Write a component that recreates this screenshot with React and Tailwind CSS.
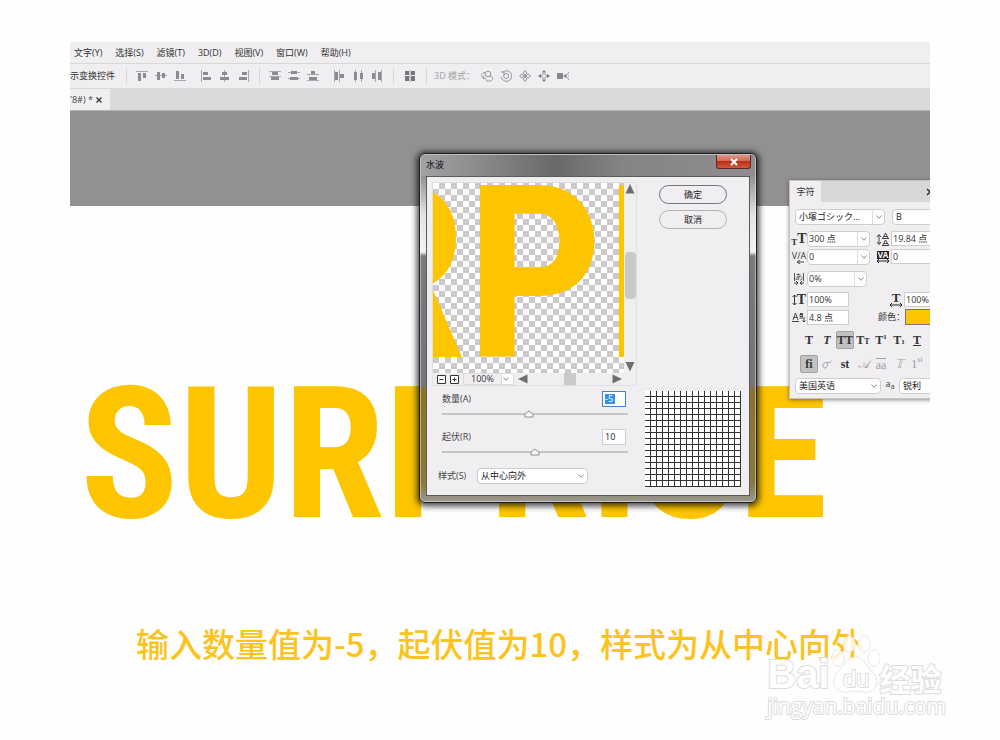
import React from "react";

const uiFont = 'font-["Open_Sans","Noto_Sans_CJK_SC",sans-serif]';

const MENUS = ["文字(Y)", "选择(S)", "滤镜(T)", "3D(D)", "视图(V)", "窗口(W)", "帮助(H)"];

const ALIGN_GROUPS = [
  [
    ["顶对齐", [[0, 1, 12, 1], [2, 3, 3, 8], [7, 3, 3, 5]]],
    ["垂直居中对齐", [[0, 5, 12, 1], [2, 2, 3, 8], [7, 3, 3, 5]]],
    ["底对齐", [[0, 10, 12, 1], [2, 1, 3, 8], [7, 4, 3, 5]]],
  ],
  [
    ["左对齐", [[1, 0, 1, 12], [3, 2, 5, 3], [3, 7, 8, 3]]],
    ["水平居中对齐", [[5, 0, 1, 12], [3, 2, 5, 3], [1, 7, 9, 3]]],
    ["右对齐", [[10, 0, 1, 12], [4, 2, 5, 3], [1, 7, 8, 3]]],
  ],
];

const SPREAD_GROUPS = [
  [
    ["按顶分布", [[0, 1, 12, 1], [3, 2, 6, 3], [0, 6, 12, 1], [2, 7, 8, 3]]],
    ["垂直居中分布", [[0, 2, 12, 1], [3, 1, 6, 3], [0, 8, 12, 1], [2, 7, 8, 3]]],
    ["按底分布", [[0, 4, 12, 1], [4, 1, 4, 3], [0, 10, 12, 1], [2, 7, 8, 3]]],
  ],
  [
    ["按左分布", [[1, 0, 1, 12], [2, 2, 3, 8], [6, 0, 1, 12], [7, 4, 4, 4]]],
    ["水平居中分布", [[3, 0, 1, 12], [2, 2, 3, 8], [9, 0, 1, 12], [8, 3, 3, 6]]],
    ["按右分布", [[4, 0, 1, 12], [1, 3, 3, 6], [10, 0, 1, 12], [7, 2, 3, 8]]],
  ],
];

function ToolButton({ label, children }) {
  return (
    <button type="button" aria-label={label} className="block h-3 w-3 shrink-0">
      <svg viewBox="0 0 12 12" className="h-3 w-3">{children}</svg>
    </button>
  );
}

function BarGroup({ items }) {
  return (
    <div className="flex gap-[7px]">
      {items.map(([label, rects]) => (
        <ToolButton key={label} label={label}>
          {rects.map(([x, y, w, h], i) => (
            <rect key={i} x={x} y={y} width={w} height={h} fill={w === 1 || h === 1 ? "#a9a7ab" : "#8d8b8f"} />
          ))}
        </ToolButton>
      ))}
    </div>
  );
}

function Separator() {
  return <div className="h-4 w-px shrink-0 bg-[#d8d6d9]" />;
}

function Modes() {
  const s = { fill: "none", stroke: "#8d8b8f", strokeWidth: 0.9 };
  return (
    <div className="ml-[6px] flex gap-[7px]">
      <ToolButton label="旋转 3D 对象">
        <circle cx="7" cy="4" r="2.8" {...s} />
        <path d="M4 2.5C1 3 -.5 5 1 7l2 1.5M3 5.500 2.500 8.500l3 .5M5 10.500c3 1.300 6.500.5 6.700-1.700C11.800 7 10 6 9 6" {...s} />
      </ToolButton>
      <ToolButton label="滚动 3D 对象">
        <circle cx="6.200" cy="6" r="2.500" {...s} />
        <path d="M3 2a5.300 5.300 0 1 1-1.800 5M1 2h3v3" {...s} />
      </ToolButton>
      <ToolButton label="拖动 3D 对象">
        <path d="M6 .5 8 3 6 5 4 3zM6 7 8 9 6 11.500 4 9zM.5 6 3 4 5 6 3 8zM7 6 9 4 11.500 6 9 8zM5 5h2v2H5z" {...s} />
      </ToolButton>
      <ToolButton label="滑动 3D 对象">
        <circle cx="6" cy="6" r="2.300" {...s} />
        <path d="M6 0 8 2.500H4zM6 12 8 9.500H4zM0 6l3-2v4zM12 6 9 4v4z" fill="#77757a" />
      </ToolButton>
      <ToolButton label="缩放 3D 相机">
        <path d="M0 3h6v6H0zM6 6l3-2v4z" fill="#88868a" />
        <path d="M12 2 9 6l3 4M12 5v2" {...s} />
      </ToolButton>
    </div>
  );
}

function Toolbar() {
  return (
    <div className="flex h-[26px] items-center border-y border-[#d9d7da] text-[9px]">
      <span className="w-[56px] shrink-0 whitespace-nowrap text-[#333]">示变换控件</span>
      <Separator />
      <div className="mx-[9px] flex gap-[14px]">
        {ALIGN_GROUPS.map((g, i) => <BarGroup key={i} items={g} />)}
      </div>
      <Separator />
      <div className="ml-[9px] mr-[10px] flex gap-[14px]">
        {SPREAD_GROUPS.map((g, i) => <BarGroup key={i} items={g} />)}
      </div>
      <Separator />
      <div className="mx-[10px]">
        <ToolButton label="自动对齐图层">
          <path d="M1 1h4v4H1zM7 1h4v4H7zM1 6h4v5H1zM7 6h4v5H7z" fill="#77757a" />
          <path d="M6 0v12" stroke="#aaa" />
        </ToolButton>
      </div>
      <Separator />
      <span className="ml-[7px] whitespace-nowrap text-[#a3a1a5]">3D 模式：</span>
      <Modes />
    </div>
  );
}

function Chevron() {
  return (
    <svg viewBox="0 0 8 6" className="h-[6px] w-2 shrink-0">
      <path d="M1.500 1.500 4 4.300l2.500-2.800" fill="none" stroke="#8a888c" />
    </svg>
  );
}

function TextBox({ label, value, className }) {
  return (
    <input
      aria-label={label}
      defaultValue={value}
      className={"h-[15px] min-w-0 border border-[#cfcdd0] bg-white px-px text-[9px] text-[#333] outline-none " + className}
    />
  );
}

function Combo({ label, value, className }) {
  return (
    <div className={"flex h-4 rounded-sm border border-[#cfcdd0] bg-white " + className}>
      <input aria-label={label} defaultValue={value} className="w-0 min-w-0 flex-1 bg-transparent px-px text-[9px] text-[#333] outline-none" />
      <button type="button" aria-label={label + "选项"} className="flex w-3 items-center justify-center border-l border-[#dddbde]"><Chevron /></button>
    </div>
  );
}

function Select({ label, id, value, className, divider }) {
  return (
    <div className={"relative flex h-4 items-center rounded-sm border border-[#cfcdd0] bg-white " + className}>
      <select id={id} aria-label={label} className="h-full w-full appearance-none bg-transparent px-[3px] text-[9px] leading-[14px] text-[#222] outline-none">
        <option>{value}</option>
      </select>
      <span className={"pointer-events-none absolute inset-y-0 right-0 flex w-3 items-center justify-center " + (divider ? "border-l border-[#dddbde]" : "")}><Chevron /></span>
    </div>
  );
}

function Glyph({ children, className = "" }) {
  return <span className={"flex w-4 shrink-0 items-center justify-center font-['Liberation_Serif',serif] leading-none text-[#333] " + className}>{children}</span>;
}

function StyleButton({ label, on, dim, children }) {
  return (
    <button
      type="button"
      aria-label={label}
      className={"flex h-[18px] w-[18px] items-center justify-center whitespace-nowrap rounded-[2px] font-['Liberation_Serif',serif] text-[12px] leading-none " + (on ? "border border-[#a3a1a4] bg-[#c3c1c4] " : "") + (dim ? "text-[#a09ea2]" : "text-[#333]")}
    >
      {children}
    </button>
  );
}

function CharacterPanel() {
  return (
    <aside className="absolute left-[719px] top-[138px] w-[190px] border border-[#c4c2c5] bg-[#f0eef1] pb-1 text-[9px] text-[#333] shadow-[0_1px_4px_rgba(0,0,0,0.45)]">
      <div className="flex h-[21px] bg-[#d9d7da]">
        <h2 className="flex w-[31px] items-center justify-center bg-[#f0eef1]">字符</h2>
        <button type="button" aria-label="折叠" className="ml-[105px]">
          <svg viewBox="0 0 6 8" className="h-2 w-[6px]"><path d="M1 1l3 3-3 3" fill="none" stroke="#222" strokeWidth="1.300" /></svg>
        </button>
      </div>
      <div className="mt-[7px] flex gap-[7px] pl-[5px]">
        <Select label="字体" value="小塚ゴシック…" className="w-[90px]" divider />
        <Select label="字体样式" value="B" className="w-[70px]" />
      </div>
      <div className="mt-[6px] flex pl-px">
        <Glyph className="font-bold"><span className="self-end text-[9px]">T</span><span className="text-[14px]">T</span></Glyph>
        <Combo label="字体大小" value="300 点" className="w-[63px]" />
        <Glyph className="ml-[5px]">
          <svg viewBox="0 0 14 14" className="h-[14px] w-[14px]"><path d="M3 3v9M1 5l2-2.500L5 5M1 10l2 2.500L5 10M7 6l2.500-5L12 6M8 4.500h3.500M7 13l2.500-5 3 5M8 11.500h4M6 6.500h7M6 13.500h7" fill="none" stroke="#444" /></svg>
        </Glyph>
        <TextBox label="行距" value="19.84 点" className="w-[70px]" />
      </div>
      <div className="mt-[2px] flex pl-px">
        <Glyph className="flex-col">
          <span className="font-[Open_Sans] text-[9px]">V/A</span>
          <svg viewBox="0 0 10 4" className="h-1 w-[10px]"><path d="M4 2h6M6 0 3 2l3 2" fill="none" stroke="#444" /></svg>
        </Glyph>
        <Combo label="字距微调" value="0" className="w-[63px]" />
        <Glyph className="ml-[5px] flex-col">
          <span className="bg-[#222] px-px font-[Open_Sans] text-[8px] font-bold text-white">VA</span>
          <svg viewBox="0 0 14 4" className="h-1 w-[14px]"><path d="M1 2h12M3 0 1 2l2 2M11 0l2 2-2 2" fill="none" stroke="#222" /></svg>
        </Glyph>
        <TextBox label="字距调整" value="0" className="w-[70px]" />
      </div>
      <div className="mt-[6px] flex pl-px">
        <Glyph className="flex-col">
          <span className="border-x border-[#555] text-[8px]">あ</span>
          <svg viewBox="0 0 12 4" className="h-1 w-3"><path d="M1 2h4M11 2H7M3 0l2 2-2 2M9 0 7 2l2 2" fill="none" stroke="#444" /></svg>
        </Glyph>
        <Combo label="比例间距" value="0%" className="w-[60px]" />
      </div>
      <div className="mt-[5px] flex pl-px">
        <Glyph>
          <svg viewBox="0 0 5 12" className="h-3 w-[5px]"><path d="M2.500 1v10M.5 3l2-2 2 2M.5 9l2 2 2-2" fill="none" stroke="#333" /></svg>
          <span className="text-[14px] font-bold">T</span>
        </Glyph>
        <TextBox label="垂直缩放" value="100%" className="w-[42px]" />
        <Glyph className="ml-[39px] flex-col">
          <span className="text-[13px] font-bold leading-[10px]">T</span>
          <svg viewBox="0 0 12 4" className="h-1 w-3"><path d="M0 2h12M2 0 0 2l2 2M10 0l2 2-2 2" fill="none" stroke="#222" /></svg>
        </Glyph>
        <TextBox label="水平缩放" value="100%" className="w-[50px]" />
      </div>
      <div className="mt-[2px] flex items-center pl-px">
        <Glyph>
          <svg viewBox="0 0 14 12" className="h-3 w-[14px]"><path d="M1 9 3.500 2 6 9M2 6.500h3M0 10.500h7M8 2.500h2.500v3H8v-2h2.500M7.500 7h3.500M12 6v5M10.500 9.500 12 11l1.500-1.500" fill="none" stroke="#444" /></svg>
        </Glyph>
        <TextBox label="基线偏移" value="4.8 点" className="w-[42px]" />
        <span className="ml-[29px] w-[27px] whitespace-nowrap">颜色：</span>
        <button type="button" aria-label="颜色" className="h-4 w-[60px] border border-[#777] bg-[#fdc500]" />
      </div>
      <div className="mt-[6px] flex pl-[10px] font-bold">
        <StyleButton label="仿粗体"><b>T</b></StyleButton>
        <StyleButton label="仿斜体"><i>T</i></StyleButton>
        <StyleButton label="全部大写字母" on>TT</StyleButton>
        <StyleButton label="小型大写字母">T<small className="self-end pb-[3px] text-[8px]">T</small></StyleButton>
        <StyleButton label="上标">T<sup className="text-[7px]">1</sup></StyleButton>
        <StyleButton label="下标">T<sub className="text-[7px]">1</sub></StyleButton>
        <StyleButton label="下划线"><u>T</u></StyleButton>
      </div>
      <div className="mt-[6px] flex pl-[10px]">
        <StyleButton label="标准连字" on><b>fi</b></StyleButton>
        <StyleButton label="上下文替代字" dim>
          <svg viewBox="0 0 12 12" className="h-3 w-3"><path d="M6 5C4 3.500 1.500 6 2 8.500s4 1.500 4.500-1S5 4 7 4.500 10 4 11 2.500" fill="none" stroke="#a09ea2" /></svg>
        </StyleButton>
        <StyleButton label="自由连字"><b>st</b></StyleButton>
        <StyleButton label="花饰字" dim><i>𝒜</i></StyleButton>
        <StyleButton label="标题替代字" dim><span className="border-t border-[#a09ea2]">aa</span></StyleButton>
        <StyleButton label="替代样式" dim><i>𝕋</i></StyleButton>
        <StyleButton label="序数字" dim>1<sup className="text-[8px]">st</sup></StyleButton>
      </div>
      <div className="mt-[5px] flex pl-[5px]">
        <Select label="语言" value="美国英语" className="w-[86px]" />
        <span className="w-[18px] text-center font-[Open_Sans] leading-3">a<sub>a</sub></span>
        <Select label="消除锯齿" value="锐利" className="w-[60px]" />
      </div>
    </aside>
  );
}

function Slider({ id, label, value, pos, active }) {
  return (
    <div className="pl-[10px] pr-[9px]">
      <div className="flex h-4 items-center justify-between pr-[2px]">
        <label htmlFor={id} className="text-[9px] text-[#444]">{label}</label>
        <div className={"flex h-4 w-6 items-center border bg-white pl-[2px] " + (active ? "border-[#3f86d0]" : "border-[#cfcdd0]")}>
          <input id={id} defaultValue={value} className={"h-[10px] min-w-0 text-[9px] leading-[10px] outline-none " + (active ? "w-[10px] bg-[#3390f0] text-white" : "w-4 text-[#222]")} />
        </div>
      </div>
      <div className="relative mt-px flex h-3 items-center">
        <div className="h-[2px] w-full bg-[#c6c4c7]" />
        <svg viewBox="0 0 10 8" className="absolute h-2 w-[10px] -translate-x-1/2" style={{ left: pos + "%" }}>
          <path d="M1 4 5 1l4 3v3H1z" fill="#fff" stroke="#8b898c" />
        </svg>
        <input type="range" aria-label={label} defaultValue={pos} className="absolute inset-0 h-full w-full opacity-0" />
      </div>
    </div>
  );
}

function Arrow({ d, label }) {
  return (
    <button type="button" aria-label={label} className="shrink-0">
      <svg viewBox="0 0 10 10" className="h-[10px] w-[10px]"><path d={d} fill="#6f6d70" /></svg>
    </button>
  );
}

function Preview() {
  return (
    <div className="w-[205px] border border-[#e2e0e3]">
      <div className="flex">
        <div className="relative h-[190px] w-[191px] overflow-hidden bg-white bg-[conic-gradient(#cbc9cc_25%,#fff_0_50%,#cbc9cc_0_75%,#fff_0)] bg-[size:12px_12px]">
          <span className="absolute -left-[101px] -top-[30px] whitespace-nowrap font-['Roboto_Condensed',Roboto,sans-serif] text-[242px] font-bold leading-none text-[#fdc500]">RPI</span>
        </div>
        <div className="flex w-3 flex-col items-center py-px">
          <Arrow label="向上滚动" d="M5 0 9.500 9.500H.5z" />
          <div className="mb-auto mt-[58px] h-[47px] w-[11px] rounded-sm bg-[#cbc9cc]" />
          <Arrow label="向下滚动" d="M5 9.500.5 0h9z" />
        </div>
      </div>
      <div className="flex h-3 items-center pl-1 text-[9px] text-[#333]">
        <button type="button" aria-label="缩小"><svg viewBox="0 0 9 9" className="h-[9px] w-[9px]"><path d="M.5.5h8v8h-8zM2.500 4.500h4" fill="#fff" stroke="#333" /></svg></button>
        <button type="button" aria-label="放大" className="ml-1"><svg viewBox="0 0 9 9" className="h-[9px] w-[9px]"><path d="M.5.5h8v8h-8zM2.500 4.500h4M4.500 2.500v4" fill="#fff" stroke="#333" /></svg></button>
        <div className="ml-1 flex h-3 w-[51px] items-center border border-[#dddbde]">
          <span className="flex-1 text-center leading-[10px]">100%</span>
          <button type="button" aria-label="缩放比例" className="flex h-full w-3 items-center border-l border-[#dddbde] bg-white"><Chevron /></button>
        </div>
        <div className="ml-1 flex flex-1 items-center justify-between pr-[14px]">
          <Arrow label="向左滚动" d="M0 5 9.500.5v9z" />
          <div className="h-3 w-3 bg-[#cbc9cc]" />
          <Arrow label="向右滚动" d="M10 5 .5.5v9z" />
        </div>
      </div>
    </div>
  );
}

function RippleDialog() {
  return (
    <section role="dialog" aria-label="水波" className="absolute left-[349px] top-[111px] rounded-[6px] border border-[#1e1d1f] bg-[linear-gradient(#8d8b8e,#8d8b8e_20px,#e2e1e3_60px,#f2f1f3_98px,#7b797c_102px,#77757a_230px,#8c7420_238px,#8c7a3a_330px,#999_100%)] px-[6px] pb-[6px] shadow-[0_1px_6px_2px_rgba(0,0,0,0.75),inset_0_0_0_1px_rgba(255,255,255,0.45)]">
      <header className="-mx-[5px] mt-px flex h-[21px] items-start justify-between rounded-t-[5px] bg-[linear-gradient(90deg,#a3a1a4,#8f8d90_15%,#6a686b_40%,#858386_60%,#8f8d90)] pr-1">
        <h1 className="pl-[5px] text-[9px] leading-5 text-[#111]">水波</h1>
        <button type="button" aria-label="关闭" className="flex h-[14px] w-[35px] items-center justify-center rounded-b-[3px] border border-t-0 border-[#5a2a22] bg-[linear-gradient(#e0998a,#cf6a55_45%,#b8301a_50%,#d2573a)]">
          <svg viewBox="0 0 8 8" className="h-2 w-2"><path d="M1 1l6 6M7 1 1 7" stroke="#fff" strokeWidth="2" /></svg>
        </button>
      </header>
      <div className="flex h-[320px] w-[324px] border border-[#5b595c] bg-[#f0eef1] pl-[5px] pt-[5px]">
        <div className="w-[205px] shrink-0">
          <Preview />
          <div className="mt-[5px]"><Slider id="amount" label="数量(A)" value="-5" pos={47} active /></div>
          <div className="mt-[9px]"><Slider id="ridges" label="起伏(R)" value="10" pos={50} /></div>
          <div className="mt-[10px] flex items-center pl-[6px] text-[9px] text-[#444]">
            <label htmlFor="style" className="w-[39px] whitespace-nowrap">样式(S)</label>
            <Select id="style" label="样式" value="从中心向外" className="w-[111px]" />
          </div>
        </div>
        <div className="flex flex-1 flex-col justify-between pb-2 pl-2 pr-2">
          <div className="flex flex-col gap-[6px] pl-[14px] pt-[3px] text-[9px] text-[#222]">
            <button type="button" className="h-[19px] w-[68px] rounded-full border border-[#77757a]">确定</button>
            <button type="button" className="h-[19px] w-[68px] rounded-full border border-[#b3b1b4]">取消</button>
          </div>
          <div className="h-[96px] w-[96px] bg-white bg-[linear-gradient(90deg,#333_1px,transparent_1px),linear-gradient(#333_1px,transparent_1px)] bg-[size:6px_6px] bg-[position:5px_5px]" />
        </div>
      </div>
    </section>
  );
}

function Watermark() {
  return (
    <div className="absolute right-[54px] top-[632px] text-white [-webkit-text-stroke:2px_#dcdcdc] [paint-order:stroke]">
      <div className="flex h-[62px] items-end leading-none">
        <span className="font-['Liberation_Sans',sans-serif] text-[40px] font-bold">Bai</span>
        <svg viewBox="0 0 50 60" className="h-[60px] w-[50px]">
          <g fill="#fff" fillOpacity=".8" stroke="#d4d4d4" strokeWidth="1">
            <ellipse cx="8" cy="24" rx="6" ry="8" />
            <ellipse cx="19" cy="10" rx="6" ry="8" />
            <ellipse cx="34" cy="10" rx="6" ry="8" />
            <ellipse cx="44" cy="24" rx="6" ry="8" />
            <path d="M26 23c8 0 9 8 15 14 9 7 7 20-4 21-5 0-7-1-11-1s-6 1-11 1C2 57 1 45 9 37c6-6 8-14 17-14z" />
          </g>
          <text x="13" y="53" className="font-['Liberation_Sans',sans-serif] text-[24px]" fill="#fff" stroke="#d4d4d4" strokeWidth="1.500">du</text>
        </svg>
        <span className="pb-px font-['Noto_Sans_CJK_SC',sans-serif] text-[31px] font-bold">经验</span>
      </div>
      <p className="font-['Open_Sans',sans-serif] text-[21px] leading-6">jingyan.baidu.com</p>
    </div>
  );
}

export default function App() {
  return (
    <main className={"relative overflow-hidden bg-[#fefefe] px-[70px] pb-[72px] pt-[42px] " + uiFont}>
      <div className="relative overflow-hidden pb-4">
        <nav className="flex h-[21px] items-center gap-[13px] bg-[#f0eef1] pl-1 text-[9px] text-[#333]">
          {MENUS.map((m) => <a key={m} href="#" className="whitespace-nowrap">{m}</a>)}
        </nav>
        <div className="bg-[#f0eef1]"><Toolbar /></div>
        <div className="flex h-[22px] border-b border-[#b5b3b6] bg-[#dbd9dc] text-[9px] text-[#444]">
          <div className="flex w-10 items-center justify-between bg-[#f0eef1] pr-2">
            <span>'8#) *</span>
            <button type="button" aria-label="关闭文档"><svg viewBox="0 0 6 6" className="h-[6px] w-[6px]"><path d="M.5.5l5 5M5.500.5l-5 5" stroke="#333" strokeWidth="1.200" /></svg></button>
          </div>
        </div>
        <div className="h-[95px] bg-[#929093]" />
        <div className="pl-[10px] pt-[157px]">
          <p className="whitespace-nowrap font-['Roboto_Condensed',Roboto,sans-serif] text-[183px] font-bold leading-none text-[#fdc500]">SURPRISE</p>
        </div>
        <RippleDialog />
        <CharacterPanel />
      </div>
      <p className="mt-[56px] whitespace-nowrap text-center font-['Noto_Sans_CJK_SC',sans-serif] text-[33px] font-medium leading-[50px] text-[#fcc31c]">输入数量值为-5，起伏值为10，样式为从中心向外</p>
      <Watermark />
    </main>
  );
}
